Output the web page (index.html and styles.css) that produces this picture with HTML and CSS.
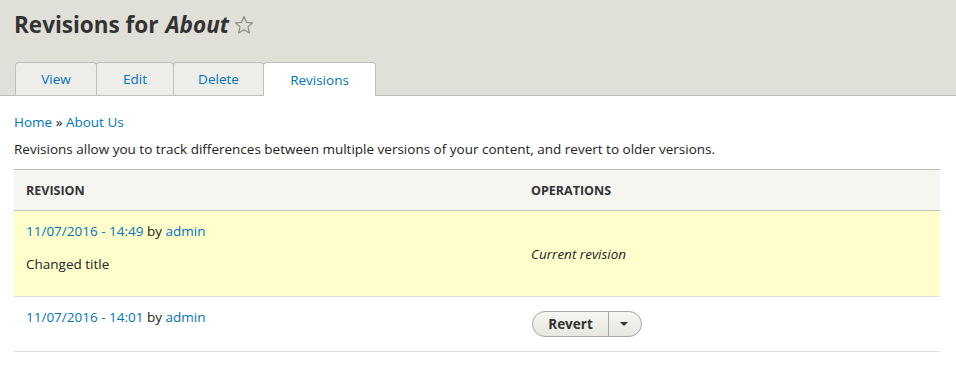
FILE: index.html
```html
<!DOCTYPE html>
<html>
<head>
    <link rel="stylesheet" href="styles.css">
</head>
<body>
<div class="header">
    <h1 class="page-title">Revisions for <em>About</em>
        <svg class="star" width="20" height="20" viewBox="0 0 20 20">
            <polygon points="10,1.5 12.5,7.3 18.6,7.8 14,11.9 15.4,18 10,14.8 4.6,18 6,11.9 1.4,7.8 7.5,7.3" fill="none" stroke="#8c8b80" stroke-width="1.2" stroke-linejoin="round"/>
        </svg>
    </h1>
    <ul class="tabs">
        <li class="tab tab-view"><a href="#">View</a></li>
        <li class="tab tab-edit"><a href="#">Edit</a></li>
        <li class="tab tab-delete"><a href="#">Delete</a></li>
        <li class="tab tab-revisions active"><a href="#">Revisions</a></li>
    </ul>
</div>

<div class="content">
    <div class="breadcrumb"><a href="#">Home</a> » <a href="#">About Us</a></div>
    <p class="description">Revisions allow you to track differences between multiple versions of your content, and revert to older versions.</p>

    <table class="revisions">
        <thead>
            <tr>
                <th class="col-revision">Revision</th>
                <th>Operations</th>
            </tr>
        </thead>
        <tbody>
            <tr class="current">
                <td>
                    <div><a href="#">11/07/2016 - 14:49</a> by <a href="#">admin</a></div>
                    <p class="log">Changed title</p>
                </td>
                <td class="middle"><em>Current revision</em></td>
            </tr>
            <tr>
                <td><div><a href="#">11/07/2016 - 14:01</a> by <a href="#">admin</a></div></td>
                <td>
                    <div class="dropbutton">
                        <span class="dropbutton-action">Revert</span>
                        <span class="dropbutton-toggle"><span class="arrow"></span></span>
                    </div>
                </td>
            </tr>
        </tbody>
    </table>
</div>
</body>
</html>
```

FILE: styles.css
```css
body {
    margin: 0;
    font-family: "Open Sans", "Noto Sans", sans-serif;
    font-size: 13.5px;
    color: #222;
    background: #fff;
}

a {
    color: #0074bd;
    text-decoration: none;
}

.header {
    background: #e0e0d8;
    padding: 10px 0 0 14px;
    border-bottom: 1px solid #bfbfba;
}

.page-title {
    margin: 0;
    font-size: 22.5px;
    line-height: 30px;
    font-weight: bold;
    color: #333;
    display: flex;
    align-items: center;
}

.page-title em {
    margin-left: 7px;
}

.star {
    margin-left: 5px;
    margin-top: -1px;
}

.tabs {
    list-style: none;
    margin: 22px 0 -1px 1px;
    padding: 0;
    display: flex;
}

.tab {
    height: 32px;
    background: #ededea;
    border: 1px solid #bfbfba;
    border-bottom: none;
    border-radius: 4px 4px 0 0;
    margin-right: -1px;
    display: flex;
    align-items: center;
    justify-content: center;
}

.tab a {
    font-size: 13.5px;
}

.tab-view { width: 80px; }
.tab-edit { width: 76px; }
.tab-delete { width: 89px; }
.tab-revisions { width: 111px; }

.tab.active {
    background: #fff;
    height: 33px;
}

.content {
    padding: 0 16px 0 14px;
}

.breadcrumb {
    margin-top: 17px;
    line-height: 18px;
}

.description {
    margin: 9px 0 0;
    line-height: 18px;
}

.revisions {
    width: 926px;
    margin-top: 11px;
    border-collapse: collapse;
}

.revisions th {
    text-align: left;
    text-transform: uppercase;
    font-size: 12.5px;
    font-weight: bold;
    color: #333;
    background: #f5f5f2;
    border-top: 1px solid #bfbfba;
    border-bottom: 1px solid #bfbfba;
    height: 40px;
    padding: 0 12px;
}

.col-revision {
    width: 481px;
}

.revisions td {
    padding: 10px 12px;
    line-height: 20px;
    vertical-align: top;
    border-bottom: 1px solid #e0e0dc;
}

.revisions td.middle {
    vertical-align: middle;
}

.revisions tr.current td {
    background: #ffffcc;
}

.log {
    margin: 13px 0 12px;
}

.dropbutton {
    display: inline-flex;
    margin: 4px 0 4px 1px;
    height: 24px;
    border: 1px solid #a6a6a6;
    border-radius: 13px;
    background: linear-gradient(#f6f6f3, #e7e7df);
    overflow: hidden;
}

.dropbutton-action {
    width: 75px;
    text-align: center;
    font-weight: bold;
    color: #333;
    line-height: 24px;
    border-right: 1px solid #a6a6a6;
}

.dropbutton-toggle {
    width: 32px;
    display: flex;
    align-items: center;
    justify-content: center;
}

.arrow {
    width: 0;
    height: 0;
    border-left: 4px solid transparent;
    border-right: 4px solid transparent;
    border-top: 4px solid #333;
    margin-left: -2px;
}
```
